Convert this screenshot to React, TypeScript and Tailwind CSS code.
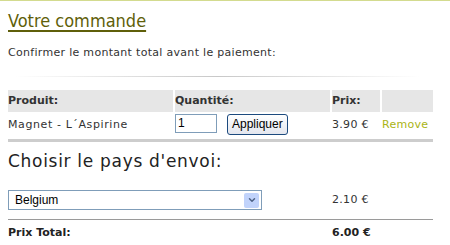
import { ChevronDown } from "lucide-react"

interface CartLine {
  product: string
  qty: string
  price: string
}

const lines: CartLine[] = [{ product: "Magnet - L´Aspirine", qty: "1", price: "3.90 €" }]

export default function App() {
  return (
    <div className="w-[450px] h-[245px] overflow-hidden bg-white border-t border-[#d3db8f] font-['DejaVu_Sans',Verdana,sans-serif] text-[#333]">
      <div className="px-2">
        {/* Title */}
        <h1 className="mt-[9px] text-[18px] leading-[22px] font-['DejaVu_Sans_Condensed','DejaVu_Sans',sans-serif] text-[#5f5f0a] underline underline-offset-[3px] decoration-[1.5px]">
          Votre commande
        </h1>

        <p className="mt-[14px] text-[11px] leading-[14px] tracking-[0.3px]">
          Confirmer le montant total avant le paiement:
        </p>

        {/* Fading divider */}
        <div className="mt-[16px] ml-[7px] w-[405px] h-px bg-gradient-to-r from-white via-[#c8c8c8] to-white" />
      </div>

      {/* Cart table */}
      <table className="mt-[11px] ml-[6px] border-separate border-spacing-[2px] text-[11px]">
        <thead>
          <tr className="bg-[#e6e6e6] text-left">
            <th className="w-[165px] h-[22px] px-0 font-bold">Produit:</th>
            <th className="w-[155px] h-[22px] px-0 font-bold">Quantité:</th>
            <th className="w-[48px] h-[22px] px-0 font-bold">Prix:</th>
            <th className="w-[51px] h-[22px]" />
          </tr>
        </thead>
        <tbody>
          {lines.map((line, i) => (
            <tr key={i} className="h-[23px] tracking-[0.3px]">
              <td className="align-middle tracking-[0.6px]">{line.product}</td>
              <td className="align-middle tracking-normal">
                <div className="flex items-start gap-[10px] pb-[2px]">
                  <div className="w-[42px] h-[19px] border border-[#7f9db9] bg-white px-[2px] text-[12px] leading-[17px] font-['Liberation_Sans',Arial,sans-serif] text-black">
                    {line.qty}
                  </div>
                  <button className="h-[21px] px-[4px] rounded-[3px] border border-[#1c4a7e] bg-gradient-to-b from-white to-[#e3e6ee] text-[12px] leading-[19px] font-['Liberation_Sans',Arial,sans-serif] text-black">
                    Appliquer
                  </button>
                </div>
              </td>
              <td className="align-middle">{line.price}</td>
              <td className="align-middle text-[#aab415]">Remove</td>
            </tr>
          ))}
        </tbody>
      </table>

      <div className="px-2">
        <div className="w-[425px] h-[3px] bg-[#cdcdcd]" />

        <h2 className="mt-[9px] text-[17px] leading-[21px] tracking-[0.7px] text-[#222]">Choisir le pays d'envoi:</h2>

        {/* Shipping */}
        <div className="mt-[18px] flex items-center text-[11px] tracking-[0.3px]">
          <div className="w-[324px]">
            <div className="w-[254px] h-[20px] border border-[#7f9db9] bg-white flex items-center justify-between pl-[6px] pr-[2px]">
              <span className="text-[12px] tracking-normal font-['Liberation_Sans',Arial,sans-serif] text-black">Belgium</span>
              <span className="w-[15px] h-[15px] rounded-[2px] bg-[#c1d3fb] flex items-center justify-center">
                <ChevronDown className="w-[10px] h-[10px] text-[#4d6185]" strokeWidth={3.5} />
              </span>
            </div>
          </div>
          <span>2.10 €</span>
        </div>

        <div className="mt-[9px] w-[425px] h-px bg-[#9a9a9a]" />

        {/* Total */}
        <div className="mt-[6px] flex text-[11px] leading-[14px] font-bold text-[#222]">
          <span className="w-[324px]">Prix Total:</span>
          <span>6.00 €</span>
        </div>
      </div>
    </div>
  )
}
